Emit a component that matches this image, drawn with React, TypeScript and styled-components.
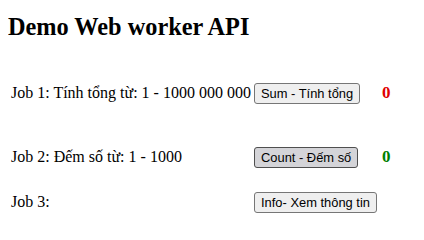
import { createGlobalStyle, styled } from "styled-components";

const GlobalStyle = createGlobalStyle`
  body {
    margin: 8px;
    font-family: "Liberation Serif", "Times New Roman", serif;
    font-size: 16px;
    color: #000;
    background: #fff;
  }
`;

interface Job {
  label: string;
  action: string;
  result?: string;
  color?: string;
  top: number;
  active?: boolean;
}

const jobs: Job[] = [
  { label: "Job 1: Tính tổng từ: 1 - 1000 000 000", action: "Sum - Tính tổng", result: "0", color: "#e00000", top: 41 },
  { label: "Job 2: Đếm số từ: 1 - 1000", action: "Count - Đếm số", result: "0", color: "#008000", top: 42, active: true },
  { label: "Job 3:", action: "Info- Xem thông tin", top: 23 },
];

function App() {
  return (
    <Page>
      <GlobalStyle />
      <Title>Demo Web worker API</Title>
      {jobs.map((j) => (
        <Row key={j.label} $top={j.top}>
          <Label>{j.label}</Label>
          <div>
            <Button $active={j.active}>{j.action}</Button>
          </div>
          {j.result && <Result $color={j.color}>{j.result}</Result>}
        </Row>
      ))}
    </Page>
  );
}

export default App;

const Page = styled.div`
  display: flex;
  flex-direction: column;
`;

const Title = styled.h1`
  font-size: 24.3px;
  font-weight: bold;
  margin: 5px 0 0;
  line-height: 28px;
`;

const Row = styled.div<{ $top: number }>`
  display: grid;
  grid-template-columns: 239px 124px auto;
  column-gap: 4px;
  align-items: center;
  padding-left: 3px;
  margin-top: ${(p) => p.$top}px;
  height: 22px;
`;

const Label = styled.span`
  white-space: nowrap;
`;

const Button = styled.button<{ $active?: boolean }>`
  font-family: "Liberation Sans", Arial, sans-serif;
  font-size: 12.9px;
  line-height: 15px;
  padding: 2px 6px;
  white-space: nowrap;
  border: 1px solid ${(p) => (p.$active ? "#4f4f4f" : "#767676")};
  border-radius: 3px;
  background: ${(p) => (p.$active ? "#d4d4d8" : "#efefef")};
  color: #000;
`;

const Result = styled.b<{ $color?: string }>`
  color: ${(p) => p.$color};
  font-size: 17px;
`;
